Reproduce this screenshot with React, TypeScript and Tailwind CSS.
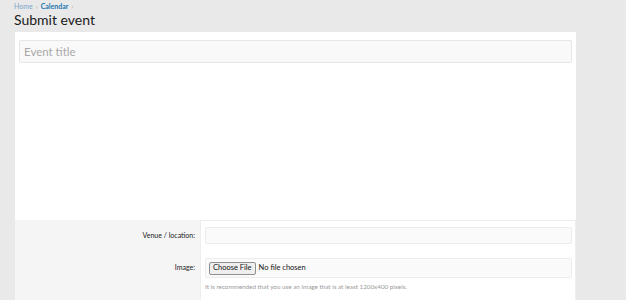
export default function App() {
  return (
    <div className="w-[626px] h-[300px] overflow-hidden bg-[#e9e9e9] text-[#141414]" style={{ fontFamily: 'Lato, "Open Sans", sans-serif' }}>
      <div className="pl-[14px] pt-[2px] text-[7px] leading-[8px] flex items-center gap-[3px]">
        <span className="text-[#7aa3cc]">Home</span>
        <span className="text-[#b0b0b0]">›</span>
        <span className="text-[#2577b1] font-bold">Calendar</span>
        <span className="text-[#b0b0b0]">›</span>
      </div>
      <div className="pl-[14px] pt-[1px] text-[14px] leading-[18px] text-[#1a1a1a]">Submit event</div>
      <div className="ml-[15px] mt-[3px] w-[561px] h-[300px] bg-white flex flex-col">
        <div className="px-[4px] pt-[8px] h-[188px]">
          <div className="h-[23px] bg-[#f9f9f9] border border-[#e6e6e6] rounded-[2px] flex items-center pl-[4px] text-[11.5px] text-[#a8a8a8]">
            Event title
          </div>
        </div>
        <div className="flex flex-1">
          <div className="w-[185px] bg-[#f5f5f5] flex flex-col items-end pr-[5px] text-[7px] text-[#222]">
            <div className="h-[17px] mt-[7px] flex items-center">Venue / location:</div>
            <div className="h-[19px] mt-[14px] flex items-center">Image:</div>
          </div>
          <div className="flex-1 border-l border-t border-r border-[#eeeeee] pl-[4px] pr-[3px] pt-[6px]">
            <div className="h-[17px] bg-[#fafafa] border border-[#ececec] rounded-[2px]"></div>
            <div className="mt-[14px] h-[20px] bg-[#fafafa] border border-[#ececec] rounded-[2px] flex items-center pl-[3px] text-[7.5px]">
              <span className="border border-[#8f8f8f] bg-[#efefef] rounded-[2px] px-[3px] h-[13px] flex items-center leading-none">Choose File</span>
              <span className="ml-[3px]">No file chosen</span>
            </div>
            <div className="mt-[4px] text-[6.3px] text-[#9a9a9a]">It is recommended that you use an image that is at least 1200x400 pixels.</div>
          </div>
        </div>
      </div>
    </div>
  );
}
